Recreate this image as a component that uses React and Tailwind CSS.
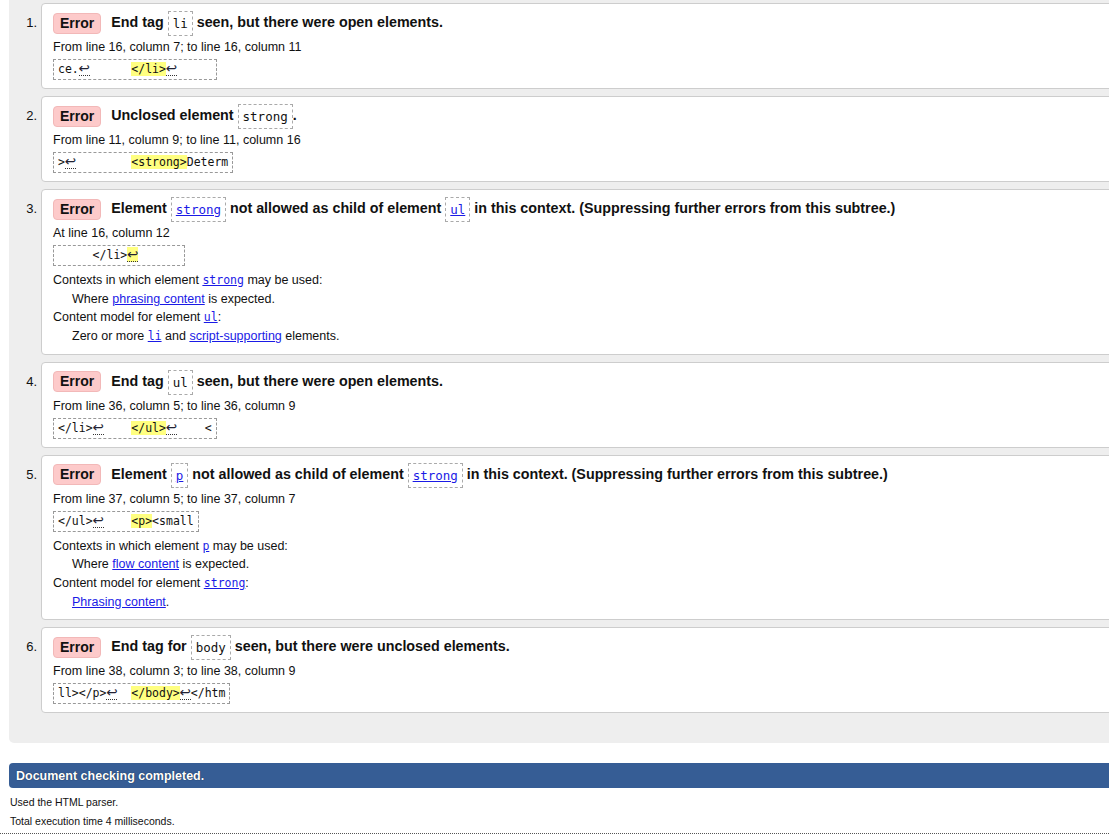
import React from "react";

const SANS = { fontFamily: '"Liberation Sans", Arial, sans-serif' };

function TCode({ children, link }) {
  return (
    <span className="inline-block border border-dashed border-[#aaa] px-[4px] py-[3px] leading-[17px] font-normal align-middle text-[12.5px] font-['DejaVu_Sans_Mono',monospace]">
      {link ? <span className="text-[#1a1ae6] underline">{children}</span> : children}
    </span>
  );
}

function Ret({ hl }) {
  return (
    <span className={"inline-block w-[11px] leading-[14px] text-center border-b border-dotted border-[#333] text-[13.5px] text-[#223] font-['DejaVu_Sans',sans-serif] " + (hl ? "bg-[#ffff80]" : "")}>↩</span>
  );
}

function HL({ children }) {
  return <span className="bg-[#ffff80]">{children}</span>;
}

function Snip({ children }) {
  return (
    <div className="mt-[3px] flex">
      <div className="h-[21px] leading-[19px] border border-dashed border-[#999] px-[4px] whitespace-pre text-[11.5px] text-[#111] font-['DejaVu_Sans_Mono',monospace]">
        <span>{children}</span>
      </div>
    </div>
  );
}

function MC({ children }) {
  return <span className="text-[#1a1ae6] underline text-[11.5px] font-['DejaVu_Sans_Mono',monospace]">{children}</span>;
}
function L({ children }) {
  return <span className="text-[#1a1ae6] underline">{children}</span>;
}

function Item({ n, title, loc, snip, extra }) {
  return (
    <div className="flex">
      <div className="w-[32px] shrink-0 pr-[4px] text-right text-[13px] text-[#111] pt-[10px] leading-[20px]">{n}.</div>
      <div className="flex-1 bg-white border border-[#cdcdcd] rounded-l-[4px] pl-[11px] pt-[7px] pb-[8px]">
        <div className="h-[24px] flex items-center font-bold text-[#111] whitespace-nowrap">
          <span className="inline-flex items-center h-[21px] px-[6px] rounded-[4px] bg-[#fdcaca] border border-[#f2b8b8] mr-[10px] text-[14px]">Error</span>
          <span className="pt-[1px] text-[14.3px]">{title}</span>
        </div>
        <div className="mt-[3px] h-[18px] text-[12.5px] leading-[18px] text-[#111]">{loc}</div>
        <Snip>{snip}</Snip>
        {extra && (
          <div className="mt-[5px] text-[12.5px] leading-[18.67px] text-[#111]">{extra}</div>
        )}
      </div>
    </div>
  );
}

export default function App() {
  return (
    <div className="w-[1109px] h-[839px] overflow-hidden bg-white" style={SANS}>
      <div className="w-[1130px] pl-[9px]">
        <div className="bg-[#eeeeee] rounded-bl-[5px] pt-[3px] pb-[30px] flex flex-col gap-[7px]">
          <Item
            n={1}
            title={<>End tag <TCode>li</TCode> seen, but there were open elements.</>}
            loc="From line 16, column 7; to line 16, column 11"
            snip={<>ce.<Ret />      <HL>&lt;/li&gt;</HL><Ret />     </>}
          />
          <Item
            n={2}
            title={<>Unclosed element <TCode>strong</TCode>.</>}
            loc="From line 11, column 9; to line 11, column 16"
            snip={<>&gt;<Ret />        <HL>&lt;strong&gt;</HL>Determ</>}
          />
          <Item
            n={3}
            title={<>Element <TCode link>strong</TCode> not allowed as child of element <TCode link>ul</TCode> in this context. (Suppressing further errors from this subtree.)</>}
            loc="At line 16, column 12"
            snip={<>     &lt;/li&gt;<Ret hl />      </>}
            extra={
              <>
                <div>Contexts in which element <MC>strong</MC> may be used:</div>
                <div className="pl-[19px]">Where <L>phrasing content</L> is expected.</div>
                <div>Content model for element <MC>ul</MC>:</div>
                <div className="pl-[19px]">Zero or more <MC>li</MC> and <L>script-supporting</L> elements.</div>
              </>
            }
          />
          <Item
            n={4}
            title={<>End tag <TCode>ul</TCode> seen, but there were open elements.</>}
            loc="From line 36, column 5; to line 36, column 9"
            snip={<>&lt;/li&gt;<Ret />    <HL>&lt;/ul&gt;</HL><Ret />    &lt;</>}
          />
          <Item
            n={5}
            title={<>Element <TCode link>p</TCode> not allowed as child of element <TCode link>strong</TCode> in this context. (Suppressing further errors from this subtree.)</>}
            loc="From line 37, column 5; to line 37, column 7"
            snip={<>&lt;/ul&gt;<Ret />    <HL>&lt;p&gt;</HL>&lt;small</>}
            extra={
              <>
                <div>Contexts in which element <MC>p</MC> may be used:</div>
                <div className="pl-[19px]">Where <L>flow content</L> is expected.</div>
                <div>Content model for element <MC>strong</MC>:</div>
                <div className="pl-[19px]"><L>Phrasing content</L>.</div>
              </>
            }
          />
          <Item
            n={6}
            title={<>End tag for <TCode>body</TCode> seen, but there were unclosed elements.</>}
            loc="From line 38, column 3; to line 38, column 9"
            snip={<>ll&gt;&lt;/p&gt;<Ret />  <HL>&lt;/body&gt;</HL><Ret />&lt;/htm</>}
          />
        </div>
        <div className="mt-[20px] h-[25px] flex items-center pl-[7px] bg-[#365d95] rounded-l-[4px] text-white font-bold text-[12.5px] [text-shadow:0_0_1px_#0b1a33]">
          Document checking completed.
        </div>
      </div>
      <div className="pl-[10px] mt-[5px] text-[10.5px] leading-[19px] text-[#111]">
        <div>Used the HTML parser.</div>
        <div>Total execution time 4 milliseconds.</div>
      </div>
      <div className="mt-[2px] border-b border-dotted border-[#555]" />
    </div>
  );
}
